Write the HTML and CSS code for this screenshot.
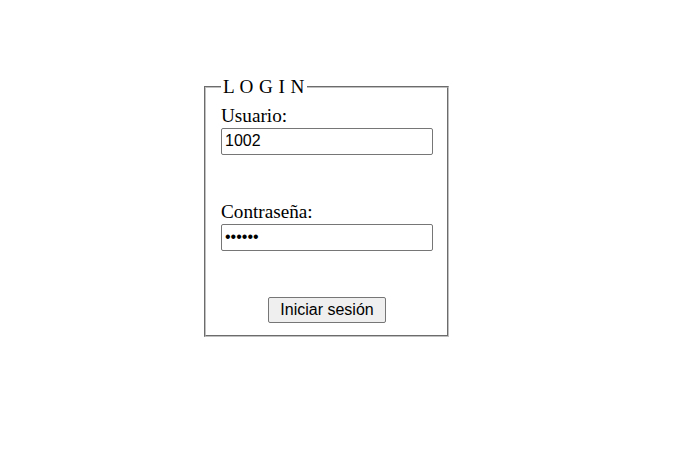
FILE: index.html
```html
<!DOCTYPE html>
<html lang="es">
<head>
<meta charset="utf-8">
<title>Login</title>
<link rel="stylesheet" href="styles.css">
</head>
<body>
<div class="page">
  <form class="login-form">
    <fieldset class="login-box">
      <legend class="login-title">L O G I N</legend>
      <label class="field-label" for="usuario">Usuario:</label>
      <input class="field-input" id="usuario" type="text" value="1002">
      <label class="field-label spaced" for="clave">Contraseña:</label>
      <input class="field-input" id="clave" type="password" value="123456">
      <button class="submit-btn" type="button">Iniciar sesión</button>
    </fieldset>
  </form>
</div>
</body>
</html>
```
FILE: styles.css
```css
html, body {
  margin: 0;
  padding: 0;
  background: #ffffff;
}

.page {
  padding: 76px 0 0 202px;
  font-family: "Liberation Serif", "Times New Roman", serif;
  color: #000000;
}

.login-form {
  margin: 0;
}

.login-box {
  box-sizing: border-box;
  width: 245px;
  margin: 0 2px;
  padding: 6.72px 14px 12px 15px;
  border: 2px groove rgb(192, 192, 192);
  font-size: 19.2px;
  display: flex;
  flex-direction: column;
  align-items: flex-start;
}

.login-title {
  padding: 0 2px;
  font-size: 19.2px;
  letter-spacing: 0.4px;
}

.field-label {
  display: block;
  line-height: normal;
}

.field-label.spaced {
  margin-top: 46px;
}

.field-input {
  box-sizing: border-box;
  width: 212px;
  height: 27px;
  margin: 1px 0 0 0;
  padding: 1px 3px;
  border: 1px solid #767676;
  border-radius: 2px;
  font-family: "Liberation Sans", Arial, sans-serif;
  font-size: 16px;
  color: #000000;
  background: #ffffff;
}

.submit-btn {
  align-self: center;
  box-sizing: border-box;
  height: 26px;
  margin-top: 46px;
  padding: 0 11px;
  border: 1px solid #767676;
  border-radius: 2px;
  background: #efefef;
  font-family: "Liberation Sans", Arial, sans-serif;
  font-size: 16px;
  color: #000000;
}
```
